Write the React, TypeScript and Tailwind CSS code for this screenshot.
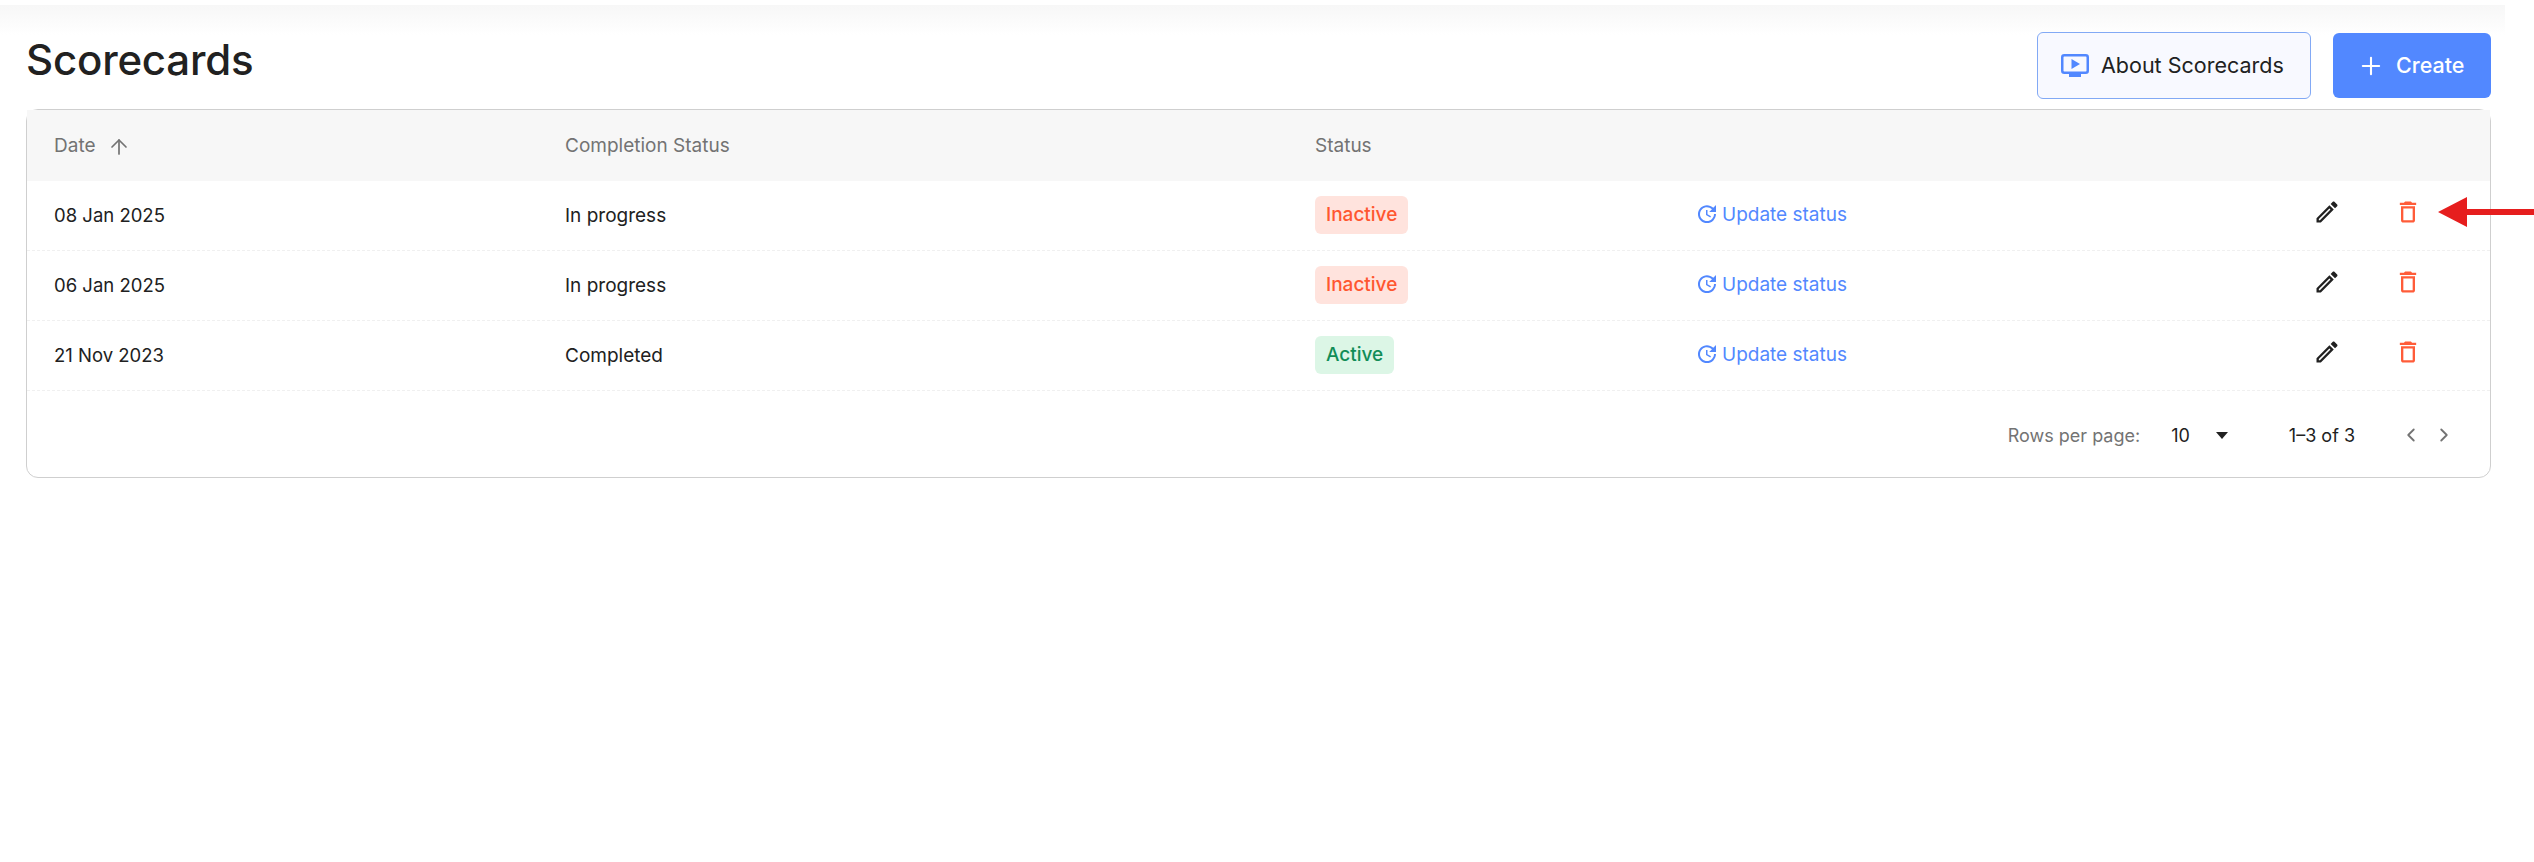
import { ArrowUp, ChevronLeft, ChevronRight, Plus } from 'lucide-react';

const rows = [
  { date: '08 Jan 2025', completion: 'In progress', status: 'Inactive' },
  { date: '06 Jan 2025', completion: 'In progress', status: 'Inactive' },
  { date: '21 Nov 2023', completion: 'Completed', status: 'Active' },
];

const gridCols = 'grid grid-cols-[511px_750px_383px_619px_83px_1fr] items-center pl-[27px]';

const UpdateIcon = () => (
  <svg viewBox="0 0 24 24" className="w-[24px] h-[24px] fill-current -ml-[3px] -mt-[3px]">
    <path d="M21 10.12h-6.78l2.74-2.82c-2.73-2.7-7.15-2.8-9.88-.1-2.73 2.71-2.73 7.08 0 9.79s7.15 2.71 9.88 0C18.32 15.65 19 14.08 19 12.1h2c0 1.98-.88 4.55-2.64 6.29-3.51 3.48-9.21 3.48-12.72 0-3.5-3.47-3.53-9.11-.02-12.58s9.14-3.47 12.65 0L21 3v7.12zM12.5 8v4.25l3.5 2.08-.72 1.21L11 13V8h1.5z" />
  </svg>
);

const EditIcon = () => (
  <svg viewBox="0 0 24 24" className="w-[28px] h-[28px] fill-[#212121] -ml-[4px]">
    <path d="M14.06 9.02l.92.92L5.92 19H5v-.92l9.06-9.06M17.66 3c-.25 0-.51.1-.7.29l-1.83 1.83 3.75 3.75 1.83-1.83c.39-.39.39-1.02 0-1.41l-2.34-2.34c-.2-.2-.45-.29-.71-.29zm-3.6 3.19L3 17.25V21h3.75L17.81 9.94l-3.75-3.75z" />
  </svg>
);

const TrashIcon = () => (
  <svg viewBox="0 0 24 24" className="w-[28px] h-[28px] fill-[#ff5c39] -ml-[6px]">
    <path d="M16 9v10H8V9h8m-1.5-6h-5l-1 1H5v2h14V4h-3.5l-1-1zM18 7H6v12c0 1.1.9 2 2 2h8c1.1 0 2-.9 2-2V7z" />
  </svg>
);

const VideoIcon = () => (
  <svg viewBox="0 0 28 24" className="w-[28px] h-[24px]">
    <rect x="1.25" y="1.25" width="25.5" height="17.5" rx="2" fill="none" stroke="#5288ff" strokeWidth="2.5" />
    <path d="M10.5 5l8.5 5-8.5 5z" fill="#5288ff" />
    <rect x="8" y="20" width="12" height="3" fill="#5288ff" />
  </svg>
);

export default function App() {
  return (
    <div className="relative min-h-screen bg-white text-[#212121] font-['Inter',sans-serif] overflow-hidden">
      {/* faded strip along the top */}
      <div className="mt-[5px] h-[30px] w-[2505px] bg-gradient-to-b from-[#f7f7f7] to-white" />

      <header className="-mt-[3px] flex items-start justify-between pl-[26px] pr-[43px]">
        <h1 className="text-[42px] leading-[56px] font-medium tracking-[-0.2px]">Scorecards</h1>
        <div className="flex items-center gap-[22px]">
          <button className="w-[274px] h-[67px] flex items-center gap-[12px] pl-[23px] rounded-[6px] border border-[#82a9f5] bg-[#f8f9ff] text-[21.5px] whitespace-nowrap">
            <VideoIcon />
            <span>About Scorecards</span>
          </button>
          <button className="w-[158px] h-[65px] flex items-center gap-[11px] pl-[24px] rounded-[6px] bg-[#5288ff] text-white text-[21.5px] font-medium">
            <Plus size={28} strokeWidth={1.8} />
            <span>Create</span>
          </button>
        </div>
      </header>

      <div className="mt-[10px] ml-[26px] w-[2465px] h-[369px] border border-[#cfcfcf] rounded-[12px] flex flex-col">
        <div className={`${gridCols} h-[71px] bg-[#f7f7f7] text-[19px] text-[#737373] pt-[2px]`}>
          <div className="flex items-center gap-[11px]">
            <span>Date</span>
            <ArrowUp size={24} strokeWidth={1.7} />
          </div>
          <div>Completion Status</div>
          <div>Status</div>
        </div>

        {rows.map((row) => (
          <div key={row.date} className={`${gridCols} h-[70px] border-b border-dashed border-[#f0f0f0] text-[19px]`}>
            <div className="mt-[1px] text-[18.5px]">{row.date}</div>
            <div className="mt-[1px]">{row.completion}</div>
            <div>
              <span
                className={`inline-flex items-center h-[38px] -mt-[1px] px-[11px] rounded-[6px] font-medium ${
                  row.status === 'Active' ? 'bg-[#dcf6e6] text-[#118d57]' : 'bg-[#ffe3dd] text-[#ff5630]'
                }`}
              >
                {row.status}
              </span>
            </div>
            <div className="-mt-[1px] flex items-center gap-[3px] text-[#5288ff]">
              <UpdateIcon />
              <span>Update status</span>
            </div>
            <div className="-mt-[8px]">
              <EditIcon />
            </div>
            <div className="-mt-[8px]">
              <TrashIcon />
            </div>
          </div>
        ))}

        <div className="flex-1 flex items-center justify-end text-[18px] pr-[35px] pt-[2px]">
          <span className="text-[#737373]">Rows per page:</span>
          <span className="ml-[31px]">10</span>
          <svg viewBox="0 0 12 7" className="ml-[26px] w-[12px] h-[7px] fill-[#212121]">
            <path d="M0 0h12L6 7z" />
          </svg>
          <span className="ml-[61px]">1–3 of 3</span>
          <ChevronLeft size={22} strokeWidth={2} className="ml-[45px] text-[#737373]" />
          <ChevronRight size={22} strokeWidth={2} className="ml-[11px] text-[#737373]" />
        </div>
      </div>

      {/* red annotation arrow */}
      <svg viewBox="0 0 96 30" className="absolute left-[2438px] top-[197px] w-[96px] h-[30px]">
        <path d="M0 15L29 0v12h67v6H29v12z" fill="#e61e1e" />
      </svg>
    </div>
  );
}
